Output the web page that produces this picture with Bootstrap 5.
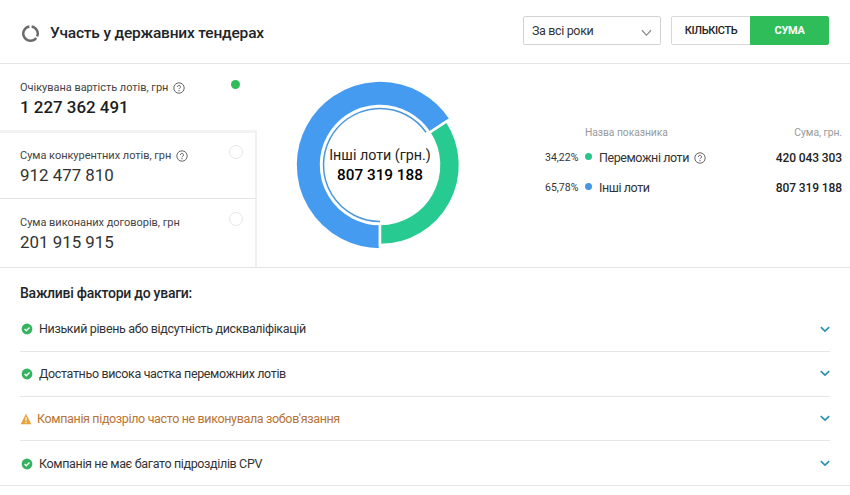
<!DOCTYPE html>
<html lang="uk">
<head>
    <meta charset="UTF-8">
    <meta name="viewport" content="width=device-width, initial-scale=1">
    <title>Участь у державних тендерах</title>
    <link href="https://cdn.jsdelivr.net/npm/bootstrap@5.3.0/dist/css/bootstrap.min.css" rel="stylesheet">
    <style>
        body { font-family: Roboto, "Liberation Sans", sans-serif; color: #212529; font-size: 12px; line-height: 20px; overflow: hidden; }
        svg { display: block; flex-shrink: 0; }
        .top-bar { height: 64px; padding: 0 21px 2px 22px; border-bottom: 1px solid #e6e6e6; }
        .top-logo { margin-top: 6px; }
        .top-bar h1 { font-size: 15.5px; line-height: 20px; font-weight: 500; letter-spacing: -.18px; margin-left: 11px; padding-top: 4px; }
        .year-select { width: 138px; height: 29px; border: 1px solid #d2d2d2; border-radius: 2px; padding: 0 8px 0 8px; margin-right: 10px; background: #fff; font-size: 12.5px; letter-spacing: -.35px; color: #333; }
        .mode-switch .btn { height: 29px; width: 80px; padding: 2px 0 0; border-radius: 2px; font-size: 11px; letter-spacing: -.35px; font-weight: 500; border: 1px solid #d8d8d8; color: #222; }
        .mode-switch .btn.active { width: 79px; background: #2ebd59; border-color: #2ebd59; color: #fff; font-weight: 700; }
        .summary { height: 204px; border-bottom: 1px solid #e3e3e3; }
        .sum-tabs { width: 257px; }
        .sum-tab { height: 68px; padding: 14px 13px 0 20px; border-right: 2px solid #f1f1f1; border-bottom: 1px solid #e6e6e6; }
        .sum-tab:last-child { border-bottom: 0; padding-top: 13px; }
        .sum-tab.active { height: 66px; padding-top: 13px; border-right-color: #fff; border-bottom: 0; }
        .sum-tab.active + .sum-tab { height: 69px; border-top: 3px solid #f3f3f3; padding-top: 12px; }
        .sum-label { font-size: 11px; line-height: 22px; letter-spacing: -.03px; color: #444; gap: 5px; }
        .sum-value { font-size: 16.9px; line-height: 16px; color: #333; }
        .sum-tab.active .sum-value { font-weight: 500; color: #1c1c1c; }
        .tab-dot { width: 14px; height: 14px; border: 1px solid #e6e6e6; border-radius: 50%; margin-right: -1px; }
        .sum-tab.active .tab-dot { width: 9px; height: 9px; background: #2ebd59; border: 0; margin: 3px 2px 0 0; }
        .donut-box { width: 168px; height: 168px; margin: 17px 0 0 39px; }
        .donut-label { font-size: 14.3px; line-height: 20px; color: #222; white-space: nowrap; }
        .donut-label strong { display: block; font-size: 15.3px; font-weight: 500; color: #000; }
        .legend-box { width: 297px; margin-top: 59px; letter-spacing: -.42px; font-size: 12.5px; }
        .legend-head { font-size: 10.3px; line-height: 20px; letter-spacing: -.05px; color: #999; padding-left: 40px; margin-bottom: 5px; }
        .legend-row { height: 30px; line-height: 20px; color: #333; }
        .share { width: 40px; font-size: 10.5px; letter-spacing: 0; }
        .color-dot { width: 7px; height: 7px; margin: 5px 7px 0 0; }
        .legend-row .hint { margin: 4px 0 0 5px; }
        .legend-row strong { font-weight: 500; font-size: 12px; letter-spacing: -.1px; color: #222; }
        .factors { padding: 15px 20px 0; border-bottom: 1px solid #e6e6e6; height: 218px; }
        .factors h2 { font-size: 14px; line-height: 20px; letter-spacing: -.25px; font-weight: 500; margin: 0 0 4.4px; }
        .factor { height: 44.7px; padding-left: 1px; border-bottom: 1px solid #e6e6e6; font-size: 12.5px; letter-spacing: -.35px; color: #333; }
        .factor:last-child { border-bottom: 0; }
        .factor .mark-icon { margin-right: 6px; }
        .factor.warn { padding-left: 0; color: #b87333; }
        .factor.warn .mark-icon { margin-right: 5px; }
    </style>
</head>
<body class="bg-white">
    <svg width="0" height="0" class="position-absolute">
        <symbol id="help" viewBox="0 0 12 12">
            <circle cx="6" cy="6" r="5.2" fill="none" stroke="#555" stroke-width=".9"/>
            <path d="M4.5 4.9a1.5 1.5 0 1 1 2.3 1.2c-.5.3-.8.6-.8 1.1" fill="none" stroke="#555" stroke-width=".9"/>
            <circle cx="6" cy="8.7" r=".6" fill="#555"/>
        </symbol>
        <symbol id="ok" viewBox="0 0 12 12">
            <circle cx="6" cy="6" r="5.4" fill="#34b35e"/>
            <path d="M3.6 6.1l1.7 1.7 3.2-3.2" fill="none" stroke="#fff" stroke-width="1.4"/>
        </symbol>
        <symbol id="warn" viewBox="0 0 12 12">
            <path d="M6 .8L11.4 11.2H.6z" fill="#e8a33d"/>
            <path d="M6 4.2v3.6M6 8.8v1.3" stroke="#fff" stroke-width="1.2"/>
        </symbol>
        <symbol id="chev" viewBox="0 0 10 7">
            <path d="M.8 1.2L5 5.2l4.2-4" fill="none" stroke="#2590ae" stroke-width="1.6"/>
        </symbol>
    </svg>

    <header class="top-bar d-flex align-items-center">
        <svg width="17" height="17" viewBox="0 0 17 17" class="top-logo">
            <g fill="none" stroke="#6b6b6b" stroke-width="2.5">
                <path d="M9.6 1.4A7.2 7.2 0 0 1 15.1 11.4"/>
                <path d="M14.2 12.9A7.2 7.2 0 1 1 7.4 1.4"/>
            </g>
        </svg>
        <h1 class="mb-0 me-auto">Участь у державних тендерах</h1>
        <button class="year-select d-flex align-items-center justify-content-between">
            <span>За всі роки</span>
            <svg width="11" height="8" viewBox="0 0 12 8" class="mt-1"><path d="M1 1l5 5.3L11 1" fill="none" stroke="#888" stroke-width="1.2"/></svg>
        </button>
        <div class="btn-group mode-switch">
            <button class="btn">КІЛЬКІСТЬ</button>
            <button class="btn active">СУМА</button>
        </div>
    </header>

    <section class="summary d-flex">
        <div class="sum-tabs flex-shrink-0">
            <div class="sum-tab active d-flex justify-content-between">
                <div>
                    <div class="sum-label d-flex align-items-center"><span>Очікувана вартість лотів, грн</span><svg width="12" height="12"><use href="#help"/></svg></div>
                    <div class="sum-value">1 227 362 491</div>
                </div>
                <span class="tab-dot"></span>
            </div>
            <div class="sum-tab d-flex justify-content-between">
                <div>
                    <div class="sum-label d-flex align-items-center"><span>Сума конкурентних лотів, грн</span><svg width="12" height="12"><use href="#help"/></svg></div>
                    <div class="sum-value">912 477 810</div>
                </div>
                <span class="tab-dot"></span>
            </div>
            <div class="sum-tab d-flex justify-content-between">
                <div>
                    <div class="sum-label">Сума виконаних договорів, грн</div>
                    <div class="sum-value">201 915 915</div>
                </div>
                <span class="tab-dot"></span>
            </div>
        </div>

        <div class="donut-box position-relative">
            <svg width="168" height="168" viewBox="-84 -84 168 168" overflow="visible">
                <g stroke="#fff" stroke-width="2.5">
                    <path d="M0 84.4A84.4 84.4 0 1 1 70.6 -46.2L49.4 -32.3A59 59 0 1 0 0 59z" fill="#459bf0"/>
                    <path d="M66.9 -43.8A80 80 0 0 1 0 80V59A59 59 0 0 0 49.4 -32.3z" fill="#27cb92"/>
                </g>
                <path d="M0 56.5A56.5 56.5 0 1 1 46 -32.8" fill="none" stroke="#4a97dc" stroke-width="1.5"/>
            </svg>
            <div class="donut-label position-absolute top-50 start-50 translate-middle text-center">Інші лоти (грн.)<strong>807 319 188</strong></div>
        </div>

        <div class="legend-box ms-auto me-2">
            <div class="legend-head d-flex justify-content-between"><span>Назва показника</span><span>Сума, грн.</span></div>
            <div class="legend-row d-flex">
                <span class="share">34,22%</span>
                <svg class="color-dot" viewBox="0 0 7 7" width="7" height="7"><circle cx="3.5" cy="3.5" r="3.5" fill="#2ac48b"/></svg>
                <span>Переможні лоти</span>
                <svg width="12" height="12" class="hint"><use href="#help"/></svg>
                <strong class="ms-auto">420 043 303</strong>
            </div>
            <div class="legend-row d-flex">
                <span class="share">65,78%</span>
                <svg class="color-dot" viewBox="0 0 7 7" width="7" height="7"><circle cx="3.5" cy="3.5" r="3.5" fill="#4696e5"/></svg>
                <span>Інші лоти</span>
                <strong class="ms-auto">807 319 188</strong>
            </div>
        </div>
    </section>

    <section class="factors">
        <h2>Важливі фактори до уваги:</h2>
        <div>
            <div class="factor d-flex align-items-center">
                <svg width="12" height="12" class="mark-icon"><use href="#ok"/></svg>
                <span>Низький рівень або відсутність дискваліфікацій</span>
                <svg width="10" height="7" class="ms-auto"><use href="#chev"/></svg>
            </div>
            <div class="factor d-flex align-items-center">
                <svg width="12" height="12" class="mark-icon"><use href="#ok"/></svg>
                <span>Достатньо висока частка переможних лотів</span>
                <svg width="10" height="7" class="ms-auto"><use href="#chev"/></svg>
            </div>
            <div class="factor warn d-flex align-items-center">
                <svg width="12" height="12" class="mark-icon"><use href="#warn"/></svg>
                <span>Компанія підозріло часто не виконувала зобов'язання</span>
                <svg width="10" height="7" class="ms-auto"><use href="#chev"/></svg>
            </div>
            <div class="factor d-flex align-items-center">
                <svg width="12" height="12" class="mark-icon"><use href="#ok"/></svg>
                <span>Компанія не має багато підрозділів CPV</span>
                <svg width="10" height="7" class="ms-auto"><use href="#chev"/></svg>
            </div>
        </div>
    </section>

    <script src="https://cdn.jsdelivr.net/npm/bootstrap@5.3.0/dist/js/bootstrap.bundle.min.js"></script>
</body>
</html>
